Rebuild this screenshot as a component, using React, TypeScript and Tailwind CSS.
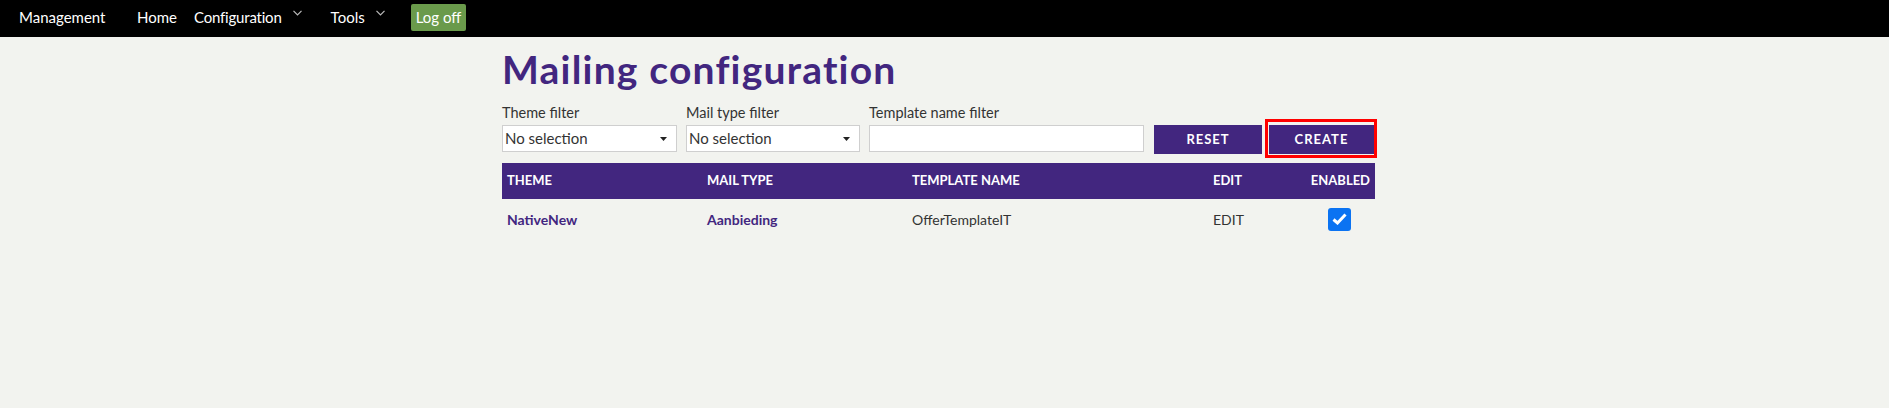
import React from "react";

function Chevron() {
  return (
    <svg width="9" height="6" viewBox="0 0 9 6" className="ml-[11px] mb-[8px]" fill="none" stroke="#bbb" strokeWidth="1.2">
      <path d="M0.5 0.8 L4.5 4.8 L8.5 0.8" />
    </svg>
  );
}

function Select() {
  return (
    <div className="flex h-[27px] items-center justify-between border border-[#cfcfcf] bg-white pl-[2px] pr-[9px] text-[15px] text-[#333]">
      <span>No selection</span>
      <svg width="7" height="4" viewBox="0 0 7 4"><path d="M0 0 H7 L3.5 4 Z" fill="#222" /></svg>
    </div>
  );
}

export default function App() {
  return (
    <div className="min-h-[408px] bg-[#f2f3ef]" style={{ fontFamily: "Lato, 'Open Sans', sans-serif" }}>
      <nav className="flex h-[37px] items-center bg-black pb-[3px] text-[15px] text-white">
        <span className="ml-[19px] w-[118px]">Management</span>
        <span className="w-[57px]">Home</span>
        <span className="flex items-center tracking-[-0.2px]">Configuration<Chevron /></span>
        <span className="ml-[29px] flex items-center">Tools<Chevron /></span>
        <span className="ml-[26px] flex h-[27px] items-center rounded-[2px] bg-[#6a9a4b] px-[5px] text-[15px]">Log off</span>
      </nav>
      <main className="ml-[502px] w-[873px]">
        <h1 className="mt-[8px] text-[39px] font-bold leading-[48px] tracking-[1.2px] text-[#42267f]">Mailing configuration</h1>
        <div className="mt-[11px] flex items-end text-[#333]">
          <div className="w-[175px]">
            <div className="mb-[3px] text-[14.5px] leading-[18px]">Theme filter</div>
            <Select />
          </div>
          <div className="ml-[9px] w-[174px]">
            <div className="mb-[3px] text-[14.5px] leading-[18px]">Mail type filter</div>
            <Select />
          </div>
          <div className="ml-[9px] w-[275px]">
            <div className="mb-[3px] text-[14.5px] leading-[18px]">Template name filter</div>
            <div className="h-[27px] border border-[#cfcfcf] bg-white" />
          </div>
          <button className="ml-[10px] mb-[-2px] h-[29px] w-[108px] bg-[#42267f] text-[13px] font-bold tracking-[1px] text-white">RESET</button>
          <div className="relative ml-[7px] mb-[-2px]">
            <button className="h-[29px] w-[105px] bg-[#42267f] text-[13px] font-bold tracking-[1px] text-white">CREATE</button>
            <div className="pointer-events-none absolute left-[-4px] right-[-3px] top-[-6px] bottom-[-4px] border-[3px] border-[#ff0000]" />
          </div>
        </div>
        <table className="mt-[11px] w-full border-collapse text-left">
          <thead>
            <tr className="h-[36px] bg-[#42267f] text-[13px] font-bold text-white">
              <th className="w-[205px] pl-[5px]">THEME</th>
              <th className="w-[205px]">MAIL TYPE</th>
              <th className="w-[301px]">TEMPLATE NAME</th>
              <th className="w-[95px]">EDIT</th>
              <th className="pr-[5px] text-right">ENABLED</th>
            </tr>
          </thead>
          <tbody>
            <tr className="h-[40px] text-[14px] text-[#333]">
              <td className="pl-[5px] font-bold text-[#42267f]">NativeNew</td>
              <td className="font-bold text-[#42267f]">Aanbieding</td>
              <td>OfferTemplateIT</td>
              <td>EDIT</td>
              <td className="pl-[20px]">
                <div className="flex h-[23px] w-[23px] items-center justify-center rounded-[3px] bg-[#0b73f2]">
                  <svg width="15" height="12" viewBox="0 0 15 12"><path d="M1.5 6.5 L5.5 10 L13.5 1.5" fill="none" stroke="white" strokeWidth="3" /></svg>
                </div>
              </td>
            </tr>
          </tbody>
        </table>
      </main>
    </div>
  );
}
